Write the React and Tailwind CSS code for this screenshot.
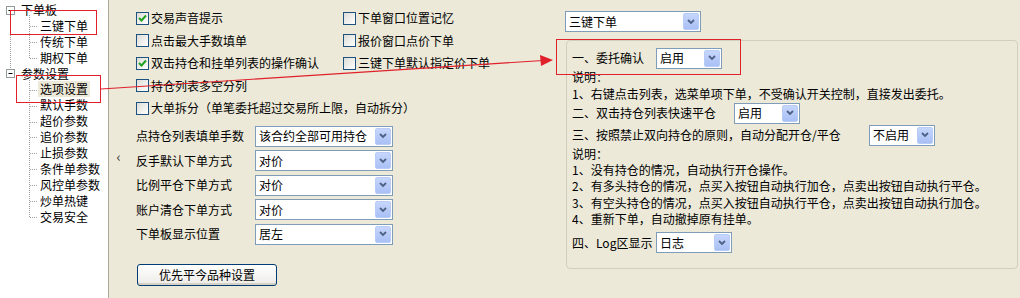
import React from 'react';

function Check({ checked }) {
    return (
        <span className="w-[13px] h-[13px] shrink-0 border border-[#1C5180] bg-gradient-to-br from-[#DCDCD7] to-white flex items-center justify-center">
            {checked && (
                <svg width="9" height="9" viewBox="0 0 9 9">
                    <path d="M1 4 L3.5 6.5 L8 1.5" fill="none" stroke="#21A121" strokeWidth="2" />
                </svg>
            )}
        </span>
    );
}

function CheckRow({ checked, label }) {
    return (
        <div className="flex items-center gap-[2px]">
            <Check checked={checked} />
            <span className="whitespace-nowrap">{label}</span>
        </div>
    );
}

function Combo({ value, className }) {
    return (
        <div className={`h-[21px] border border-[#7F9DB9] bg-white flex items-center justify-between ${className}`}>
            <span className="pl-[3px] whitespace-nowrap">{value}</span>
            <span className="w-[16px] h-[17px] mr-[1px] rounded-[2px] bg-gradient-to-b from-[#C6D6FC] to-[#A9C0F5] border border-[#B8CCF7] flex items-center justify-center">
                <svg width="8" height="6" viewBox="0 0 8 6">
                    <path d="M1 1 L4 4 L7 1" fill="none" stroke="#4D6185" strokeWidth="1.8" />
                </svg>
            </span>
        </div>
    );
}

const treeTop = ['三键下单', '传统下单', '期权下单'];
const treeParams = ['选项设置', '默认手数', '超价参数', '追价参数', '止损参数', '条件单参数', '风控单参数', '炒单热键', '交易安全'];

const comboRows = [
    ['点持仓列表填单手数', '该合约全部可用持仓'],
    ['反手默认下单方式', '对价'],
    ['比例平仓下单方式', '对价'],
    ['账户清仓下单方式', '对价'],
    ['下单板显示位置', '居左'],
];

export default function App() {
    return (
        <div className="relative w-[1020px] h-[298px] bg-[#ECE9D8] flex text-[12px] leading-[16px] text-black font-['Noto_Sans_CJK_SC',sans-serif] overflow-hidden">
            {/* Tree */}
            <div className="relative w-[109px] h-full bg-white border-r border-[#ACA899] pt-[2px]">
                <svg className="absolute left-0 top-0" width="108" height="230">
                    <g stroke="#A0A0A0" strokeDasharray="1 1" fill="none">
                        <path d="M10.5 15 V69" />
                        <path d="M29.5 15 V58 M29.5 80 V217" />
                        <path d="M30 26.5 H38 M30 42.5 H38 M30 58.5 H38" />
                        <path d="M30 90.5 H38 M30 106.5 H38 M30 122.5 H38 M30 137.5 H38 M30 153.5 H38 M30 169.5 H38 M30 185.5 H38 M30 201.5 H38 M30 217.5 H38" />
                    </g>
                    <g>
                        <rect x="6.5" y="6.5" width="8" height="8" fill="white" stroke="#919B9C" />
                        <path d="M8.5 10.5 H12.5" stroke="#000" />
                        <rect x="6.5" y="69.5" width="8" height="8" fill="white" stroke="#919B9C" />
                        <path d="M8.5 73.5 H12.5" stroke="#000" />
                    </g>
                </svg>
                <div className="relative h-[15.9px] pl-[21px] flex items-center">下单板</div>
                {treeTop.map(t => (
                    <div key={t} className="relative h-[15.9px] pl-[40px] flex items-center">{t}</div>
                ))}
                <div className="relative h-[15.9px] pl-[21px] flex items-center">参数设置</div>
                {treeParams.map(t => (
                    <div key={t} className="relative h-[15.9px] pl-[38px] flex items-center">
                        <span className={`px-[2px] ${t === '选项设置' ? 'bg-[#ECE9D8]' : ''}`}>{t}</span>
                    </div>
                ))}
            </div>

            {/* Collapse strip */}
            <div className="w-[19px] h-full flex items-start justify-center pt-[148px] text-[#333] text-[14px]">‹</div>

            {/* Left settings */}
            <div className="w-[437px] h-full pl-[8px] pt-[7px] flex flex-col">
                <div className="grid grid-cols-[207px_1fr]">
                    <div className="h-[22.5px] flex items-center"><CheckRow checked label="交易声音提示" /></div>
                    <div className="h-[22.5px] flex items-center"><CheckRow label="下单窗口位置记忆" /></div>
                    <div className="h-[22.5px] flex items-center"><CheckRow label="点击最大手数填单" /></div>
                    <div className="h-[22.5px] flex items-center"><CheckRow label="报价窗口点价下单" /></div>
                    <div className="h-[22.5px] flex items-center"><CheckRow checked label="双击持仓和挂单列表的操作确认" /></div>
                    <div className="h-[22.5px] flex items-center"><CheckRow label="三键下单默认指定价下单" /></div>
                </div>
                <div className="h-[22.5px] flex items-center"><CheckRow label="持仓列表多空分列" /></div>
                <div className="h-[22.5px] flex items-center"><CheckRow label="大单拆分（单笔委托超过交易所上限，自动拆分）" /></div>
                <div className="mt-[4.5px] flex flex-col">
                    {comboRows.map(([l, v]) => (
                        <div key={l} className="h-[24.5px] flex items-center">
                            <span className="w-[119px] whitespace-nowrap">{l}</span>
                            <Combo value={v} className="w-[138px]" />
                        </div>
                    ))}
                </div>
                <button className="mt-[17px] ml-[1px] w-[140px] h-[22px] rounded-[3px] border border-[#003C74] bg-gradient-to-b from-white to-[#ECEBE6] text-[12px] leading-[16px] shadow-[inset_0_-2px_0_#D6D0C5]">
                    优先平今品种设置
                </button>
            </div>

            {/* Right settings */}
            <div className="flex-1 h-full pt-[11px] pr-[2px] flex flex-col">
                <Combo value="三键下单" className="w-[136px]" />
                <div className="mt-[8px] ml-[1px] h-[229px] border border-[#D0D0BF] rounded-[4px] pl-[5px] pt-[6px] flex flex-col">
                    <div className="h-[22px] flex items-center">
                        <span className="w-[84px]">一、委托确认</span>
                        <Combo value="启用" className="w-[66px]" />
                    </div>
                    <div className="h-[16.5px] flex items-center">说明：</div>
                    <div className="h-[16.5px] flex items-center">1、右键点击列表，选菜单项下单，不受确认开关控制，直接发出委托。</div>
                    <div className="h-[22px] flex items-center">
                        <span className="w-[162px]">二、双击持仓列表快速平仓</span>
                        <Combo value="启用" className="w-[66px]" />
                    </div>
                    <div className="h-[22px] flex items-center">
                        <span className="w-[297px]">三、按照禁止双向持仓的原则，自动分配开仓/平仓</span>
                        <Combo value="不启用" className="w-[66px]" />
                    </div>
                    <div className="h-[16.2px] flex items-center">说明：</div>
                    <div className="h-[16.2px] flex items-center">1、没有持仓的情况，自动执行开仓操作。</div>
                    <div className="h-[16.2px] flex items-center">2、有多头持仓的情况，点买入按钮自动执行加仓，点卖出按钮自动执行平仓。</div>
                    <div className="h-[16.2px] flex items-center">3、有空头持仓的情况，点买入按钮自动执行平仓，点卖出按钮自动执行加仓。</div>
                    <div className="h-[16.2px] flex items-center">4、重新下单，自动撤掉原有挂单。</div>
                    <div className="mt-[5px] h-[22px] flex items-center">
                        <span className="w-[84px]">四、Log区显示</span>
                        <Combo value="日志" className="w-[76px]" />
                    </div>
                </div>
            </div>

            {/* Red annotations */}
            <div className="absolute left-[10px] top-[10px] w-[87px] h-[25px] border border-[#E0202A]" />
            <div className="absolute left-[16px] top-[75px] w-[85px] h-[28px] border border-[#E0202A]" />
            <div className="absolute left-[556px] top-[39px] w-[185px] h-[36px] border border-[#E0202A]" />
            <svg className="absolute left-0 top-0 pointer-events-none" width="1020" height="298">
                <line x1="101" y1="89" x2="543" y2="60.5" stroke="#E0202A" strokeWidth="1.2" />
                <polygon points="553,60 540,55 541,66" fill="#E0202A" />
            </svg>
        </div>
    );
}
